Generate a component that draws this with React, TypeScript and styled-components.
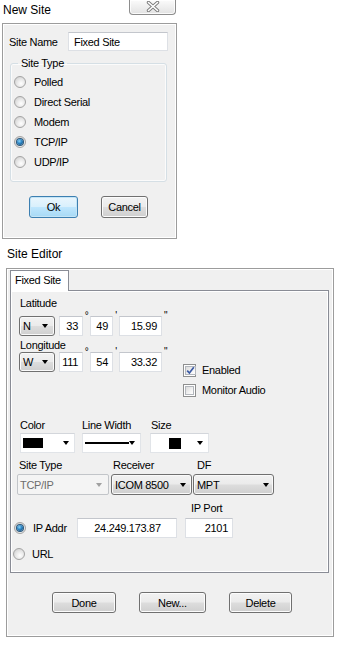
import React from 'react';
import styled, { createGlobalStyle, css } from 'styled-components';

const GlobalStyle = createGlobalStyle`
  html, body {
    margin: 0;
    padding: 0;
    background: #ffffff;
  }
  body {
    font-family: 'Liberation Sans', Arial, sans-serif;
    font-size: 11px;
    letter-spacing: -0.3px;
    color: #000;
  }
  * {
    box-sizing: border-box;
  }
`;

const Page = styled.div`
  width: 339px;
  height: 645px;
  display: flex;
  flex-direction: column;
  overflow: hidden;
`;

const TitleBar = styled.div<{ $height: number; $indent: number; $width: number }>`
  width: ${p => p.$width}px;
  height: ${p => p.$height}px;
  padding-left: ${p => p.$indent}px;
  display: flex;
  align-items: flex-start;
`;

const TitleText = styled.div<{ $line: number }>`
  font-size: 12px;
  letter-spacing: 0;
  line-height: ${p => p.$line}px;
  color: #000;
`;

const CloseButton = styled.div`
  margin-left: auto;
  margin-right: 1px;
  width: 47px;
  height: 15px;
  border: 1px solid #8d8d8d;
  border-top: none;
  border-radius: 0 0 4px 4px;
  background: linear-gradient(#fbfbfb, #ececec 60%, #e2e2e2);
  box-shadow: inset 0 0 0 1px rgba(255, 255, 255, 0.8);
  display: flex;
  justify-content: center;
  padding-top: 1px;
`;

const Client = styled.div<{ $left: number; $width: number; $height: number }>`
  margin-left: ${p => p.$left}px;
  width: ${p => p.$width}px;
  height: ${p => p.$height}px;
  background: #f0f0f0;
  border: 1px solid #9c9c9c;
  box-shadow: inset 0 0 0 1px #ffffff;
  display: flex;
  flex-direction: column;
`;

const NewSiteBody = styled.div`
  padding: 8px 0 0 6px;
  display: flex;
  flex-direction: column;
`;

const NameRow = styled.div`
  display: flex;
  align-items: center;
  height: 19px;
`;

const NameLabel = styled.span`
  width: 59px;
`;

const TextBox = styled.div<{ $width: number; $height?: number; $align?: string }>`
  width: ${p => p.$width}px;
  height: ${p => p.$height ?? 20}px;
  background: #ffffff;
  border: 1px solid #dde0e5;
  border-top-color: #c3c6cc;
  display: flex;
  align-items: center;
  justify-content: ${p => p.$align ?? 'flex-start'};
  padding: 0 4px 0 5px;
  white-space: nowrap;
`;

const GroupBox = styled.fieldset`
  margin: 5px 0 0 1px;
  width: 157px;
  padding: 2px 0 9px 3px;
  border: 1px solid #d5dfe5;
  border-radius: 3px;
  box-shadow: inset 0 0 0 1px #fbfbfb;
`;

const GroupLegend = styled.legend`
  margin-left: 4px;
  padding: 0 3px;
  line-height: 14px;
`;

const OptionRow = styled.div`
  height: 20px;
  display: flex;
  align-items: center;
  gap: 8px;
`;

const RadioDot = styled.span<{ $checked?: boolean }>`
  width: 12px;
  height: 12px;
  border-radius: 50%;
  border: 1px solid #a3a3a3;
  background: radial-gradient(circle at 60% 65%, #ffffff 0%, #e8e8e8 45%, #c8c8c8 100%);
  display: flex;
  align-items: center;
  justify-content: center;
  flex-shrink: 0;
  ${p =>
    p.$checked &&
    css`
      &::after {
        content: '';
        width: 6px;
        height: 6px;
        border-radius: 50%;
        background: radial-gradient(circle at 40% 35%, #8bd3f7 0%, #2a83c3 45%, #0e3e66 100%);
        box-shadow: 0 0 0 1px #29577b;
      }
    `}
`;

const ButtonRow = styled.div<{ $top: number; $indent: number; $gap: number }>`
  margin-top: ${p => p.$top}px;
  padding-left: ${p => p.$indent}px;
  display: flex;
  gap: ${p => p.$gap}px;
`;

const PushButton = styled.div<{ $width: number; $height: number; $default?: boolean }>`
  width: ${p => p.$width}px;
  height: ${p => p.$height}px;
  border: 1px solid #707070;
  border-radius: 3px;
  background: linear-gradient(#f2f2f2 0%, #ebebeb 48%, #dddddd 52%, #cfcfcf 100%);
  box-shadow: inset 0 0 0 1px #fcfcfc;
  display: flex;
  align-items: center;
  justify-content: center;
  ${p =>
    p.$default &&
    css`
      border-color: #3c7fb1;
      background: linear-gradient(#eaf6fd 0%, #d9f0fc 48%, #bee6fd 52%, #a7d9f5 100%);
      box-shadow: inset 0 0 0 1px #c4e5f6;
    `}
`;

/* Site Editor */

const EditorBody = styled.div`
  padding: 1px 4px 0 3px;
  display: flex;
  flex-direction: column;
`;

const TabStrip = styled.div`
  display: flex;
  height: 20px;
`;

const Tab = styled.div`
  width: 59px;
  height: 21px;
  margin-bottom: -1px;
  background: #ffffff;
  border: 1px solid #898c95;
  border-bottom: none;
  padding-left: 4px;
  line-height: 19px;
  position: relative;
  z-index: 1;
`;

const TabPanel = styled.div`
  height: 283px;
  border: 1px solid #898c95;
  box-shadow: inset 0 0 0 1px #ffffff;
  background: #f0f0f0;
  padding: 5px 0 0 8px;
  display: flex;
  flex-direction: column;
`;

const FieldLabel = styled.div<{ $top?: number; $bottom?: number; $indent?: number }>`
  line-height: 14px;
  height: 14px;
  margin-top: ${p => p.$top ?? 0}px;
  margin-bottom: ${p => p.$bottom ?? 0}px;
  padding-left: ${p => p.$indent ?? 1}px;
  white-space: nowrap;
`;

const PositionBlock = styled.div`
  display: flex;
  align-items: flex-start;
`;

const CoordColumn = styled.div`
  display: flex;
  flex-direction: column;
`;

const CoordRow = styled.div`
  display: flex;
  align-items: center;
  height: 20px;
`;

const Spacer = styled.span<{ $width: number }>`
  width: ${p => p.$width}px;
  flex-shrink: 0;
`;

const UnitMark = styled.span<{ $width: number }>`
  width: ${p => p.$width}px;
  align-self: flex-start;
  margin-top: -5px;
  font-size: 10px;
  line-height: 10px;
  text-align: center;
`;

const Arrow = styled.span<{ $disabled?: boolean }>`
  width: 0;
  height: 0;
  border-left: 3.5px solid transparent;
  border-right: 3.5px solid transparent;
  border-top: 4px solid ${p => (p.$disabled ? '#a0a0a0' : '#000')};
  flex-shrink: 0;
`;

const ComboButton = styled.div<{ $width: number; $height: number; $right: number }>`
  width: ${p => p.$width}px;
  height: ${p => p.$height}px;
  border: 1px solid #707070;
  border-radius: 3px;
  background: linear-gradient(#f2f2f2 0%, #ebebeb 48%, #dddddd 52%, #cfcfcf 100%);
  box-shadow: inset 0 0 0 1px #fafafa;
  display: flex;
  align-items: center;
  justify-content: space-between;
  padding: 0 ${p => p.$right}px 0 3px;
  white-space: nowrap;
`;

const ComboDisabled = styled.div<{ $width: number; $height: number }>`
  width: ${p => p.$width}px;
  height: ${p => p.$height}px;
  border: 1px solid #c2c5c9;
  border-radius: 2px;
  background: #f4f4f4;
  color: #6d6d6d;
  display: flex;
  align-items: center;
  justify-content: space-between;
  padding: 0 6px 0 2px;
`;

const DrawCombo = styled.div<{ $width: number }>`
  width: ${p => p.$width}px;
  height: 20px;
  background: #ffffff;
  border: 1px solid #e1e4e8;
  border-top-color: #d3d6db;
  display: flex;
  align-items: center;
  padding: 0 5px 0 2px;
`;

const DrawArea = styled.div<{ $align?: string }>`
  flex: 1;
  display: flex;
  align-items: center;
  justify-content: ${p => p.$align ?? 'center'};
  height: 100%;
`;

const Swatch = styled.span<{ $width: number; $height: number }>`
  width: ${p => p.$width}px;
  height: ${p => p.$height}px;
  background: #000;
  flex-shrink: 0;
`;

const CheckColumn = styled.div`
  margin-top: 64px;
  margin-left: 14px;
  display: flex;
  flex-direction: column;
`;

const CheckRow = styled.div`
  height: 20px;
  display: flex;
  align-items: center;
  gap: 6px;
`;

const CheckBox = styled.span`
  width: 13px;
  height: 13px;
  border: 1px solid #8e8f8f;
  background: #ffffff;
  padding: 1px;
  display: flex;
  flex-shrink: 0;
`;

const CheckFace = styled.span`
  flex: 1;
  border: 1px solid #b3b7bd;
  background: linear-gradient(135deg, #dcdcdc, #f6f6f6 70%, #ffffff);
  display: flex;
  align-items: center;
  justify-content: center;
`;

const PickRow = styled.div<{ $top: number }>`
  margin-top: ${p => p.$top}px;
  display: flex;
  align-items: flex-start;
`;

const PickColumn = styled.div<{ $shift?: number; $gap: number }>`
  display: flex;
  flex-direction: column;
  margin-left: ${p => p.$shift ?? 0}px;
  gap: ${p => p.$gap}px;
`;

const AddressRow = styled.div`
  margin-top: 6px;
  margin-left: -5px;
  display: flex;
  align-items: flex-end;
`;

const AddressPick = styled.div`
  display: flex;
  align-items: center;
  height: 20px;
`;

const RadioLabel = styled.span<{ $width?: number }>`
  margin-left: 7px;
  width: ${p => (p.$width ? `${p.$width}px` : 'auto')};
  white-space: nowrap;
`;

const PortColumn = styled.div`
  margin-left: 8px;
  display: flex;
  flex-direction: column;
  gap: 3px;
`;

const UrlRow = styled.div`
  margin-top: 6px;
  margin-left: -6px;
  height: 20px;
  display: flex;
  align-items: center;
`;

const CloseGlyph = () => (
  <svg width="14" height="11" viewBox="0 0 14 11">
    <path d="M2.5 1.5 L11.5 9.5 M11.5 1.5 L2.5 9.5" stroke="#7b7b7b" strokeWidth="3.4" strokeLinecap="round" />
    <path d="M2.5 1.5 L11.5 9.5 M11.5 1.5 L2.5 9.5" stroke="#ffffff" strokeWidth="1.6" strokeLinecap="round" />
  </svg>
);

const CheckMark = () => (
  <svg width="9" height="9" viewBox="0 0 9 9">
    <path d="M1.2 4.6 L3.4 7 L7.8 1.3" fill="none" stroke="#3b5aa4" strokeWidth="1.7" />
  </svg>
);

const siteTypes = ['Polled', 'Direct Serial', 'Modem', 'TCP/IP', 'UDP/IP'];

const NewSiteDialog = () => (
  <>
    <TitleBar $width={177} $height={23} $indent={3}>
      <TitleText $line={20}>New Site</TitleText>
      <CloseButton>
        <CloseGlyph />
      </CloseButton>
    </TitleBar>
    <Client $left={2} $width={175} $height={216}>
      <NewSiteBody>
        <NameRow>
          <NameLabel>Site Name</NameLabel>
          <TextBox $width={100} $height={19}>Fixed Site</TextBox>
        </NameRow>
        <GroupBox>
          <GroupLegend>Site Type</GroupLegend>
          {siteTypes.map(t => (
            <OptionRow key={t}>
              <RadioDot $checked={t === 'TCP/IP'} />
              <span>{t}</span>
            </OptionRow>
          ))}
        </GroupBox>
        <ButtonRow $top={14} $indent={20} $gap={23}>
          <PushButton $width={49} $height={22} $default>Ok</PushButton>
          <PushButton $width={47} $height={22}>Cancel</PushButton>
        </ButtonRow>
      </NewSiteBody>
    </Client>
  </>
);

interface CoordProps {
  hemi: string;
  deg: string;
  min: string;
  sec: string;
}

const Coordinate = ({ hemi, deg, min, sec }: CoordProps) => (
  <CoordRow>
    <ComboButton $width={36} $height={20} $right={6}>
      <span>{hemi}</span>
      <Arrow />
    </ComboButton>
    <Spacer $width={4} />
    <TextBox $width={24} $align="flex-end">{deg}</TextBox>
    <UnitMark $width={7}>°</UnitMark>
    <TextBox $width={23} $align="flex-end">{min}</TextBox>
    <UnitMark $width={6}>'</UnitMark>
    <TextBox $width={43} $align="flex-end">{sec}</TextBox>
    <UnitMark $width={7}>"</UnitMark>
  </CoordRow>
);

const SiteEditor = () => (
  <>
    <TitleBar $width={339} $height={29} $indent={7}>
      <TitleText $line={30}>Site Editor</TitleText>
    </TitleBar>
    <Client $left={6} $width={328} $height={369}>
      <EditorBody>
        <TabStrip>
          <Tab>Fixed Site</Tab>
        </TabStrip>
        <TabPanel>
          <PositionBlock>
            <CoordColumn>
              <FieldLabel $bottom={6}>Latitude</FieldLabel>
              <Coordinate hemi="N" deg="33" min="49" sec="15.99" />
              <FieldLabel $top={2}>Longitude</FieldLabel>
              <Coordinate hemi="W" deg="111" min="54" sec="33.32" />
            </CoordColumn>
            <CheckColumn>
              <CheckRow>
                <CheckBox>
                  <CheckFace>
                    <CheckMark />
                  </CheckFace>
                </CheckBox>
                <span>Enabled</span>
              </CheckRow>
              <CheckRow>
                <CheckBox>
                  <CheckFace />
                </CheckBox>
                <span>Monitor Audio</span>
              </CheckRow>
            </CheckColumn>
          </PositionBlock>

          <PickRow $top={18}>
            <PickColumn $shift={1} $gap={1}>
              <FieldLabel $indent={0}>Color</FieldLabel>
              <DrawCombo $width={55}>
                <Swatch $width={20} $height={10} />
                <DrawArea />
                <Arrow />
              </DrawCombo>
            </PickColumn>
            <PickColumn $shift={7} $gap={1}>
              <FieldLabel $indent={0}>Line Width</FieldLabel>
              <DrawCombo $width={59}>
                <DrawArea $align="flex-start">
                  <Swatch $width={44} $height={2} />
                </DrawArea>
                <Arrow />
              </DrawCombo>
            </PickColumn>
            <PickColumn $shift={9} $gap={1}>
              <FieldLabel $indent={1}>Size</FieldLabel>
              <DrawCombo $width={59}>
                <DrawArea>
                  <Swatch $width={12} $height={11} />
                </DrawArea>
                <Arrow />
              </DrawCombo>
            </PickColumn>
          </PickRow>

          <PickRow $top={5}>
            <PickColumn $shift={-2} $gap={2}>
              <FieldLabel $indent={2}>Site Type</FieldLabel>
              <ComboDisabled $width={92} $height={21}>
                <span>TCP/IP</span>
                <Arrow $disabled />
              </ComboDisabled>
            </PickColumn>
            <PickColumn $shift={2} $gap={2}>
              <FieldLabel $indent={2}>Receiver</FieldLabel>
              <ComboButton $width={81} $height={21} $right={5}>
                <span>ICOM 8500</span>
                <Arrow />
              </ComboButton>
            </PickColumn>
            <PickColumn $shift={1} $gap={2}>
              <FieldLabel $indent={4}>DF</FieldLabel>
              <ComboButton $width={81} $height={21} $right={4}>
                <span>MPT</span>
                <Arrow />
              </ComboButton>
            </PickColumn>
          </PickRow>

          <AddressRow>
            <AddressPick>
              <RadioDot $checked />
              <RadioLabel $width={44}>IP Addr</RadioLabel>
              <TextBox $width={100} $align="center">24.249.173.87</TextBox>
            </AddressPick>
            <PortColumn>
              <FieldLabel $indent={6}>IP Port</FieldLabel>
              <TextBox $width={48} $align="flex-end">2101</TextBox>
            </PortColumn>
          </AddressRow>

          <UrlRow>
            <RadioDot />
            <RadioLabel>URL</RadioLabel>
          </UrlRow>
        </TabPanel>

        <ButtonRow $top={19} $indent={42} $gap={23}>
          <PushButton $width={64} $height={21}>Done</PushButton>
          <PushButton $width={67} $height={21}>New...</PushButton>
          <PushButton $width={63} $height={21}>Delete</PushButton>
        </ButtonRow>
      </EditorBody>
    </Client>
  </>
);

const App = () => (
  <>
    <GlobalStyle />
    <Page>
      <NewSiteDialog />
      <SiteEditor />
    </Page>
  </>
);

export default App;
